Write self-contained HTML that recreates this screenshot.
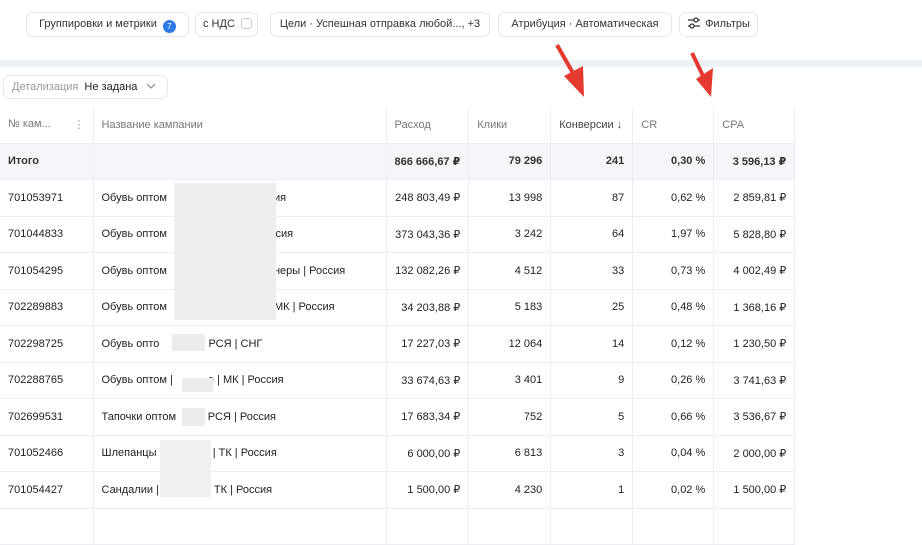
<!DOCTYPE html>
<html><head><meta charset="utf-8"><style>
*{margin:0;padding:0;box-sizing:border-box}
body{width:922px;height:518px;overflow:hidden;background:#fff;font-family:"Liberation Sans","DejaVu Sans",sans-serif;font-size:11px;color:#222;position:relative}
.chip{position:absolute;top:12px;height:25px;border:1px solid #e4e6ea;border-radius:7px;padding:0 7px;line-height:23px;font-size:11px;color:#333;white-space:nowrap;background:#fff;text-align:center}
.band{position:absolute;left:0;top:60px;width:922px;height:7px;background:#eef1f6}
.det{position:absolute;left:3px;top:75px;height:24px;width:165px;border:1px solid #e4e6ea;border-radius:7px;line-height:22px;padding-left:8px;color:#999}
.det b{font-weight:normal;color:#222;margin-left:3px}
table{position:absolute;left:0;top:107px;border-collapse:collapse;table-layout:fixed}
td{height:36.5px;border-bottom:1px solid #eceef1;border-right:1px solid #eceef1;padding:0 8px;white-space:nowrap;overflow:hidden}
tr.h td{color:#777;height:36px}
tr.t td{background:#f5f6f9;font-weight:bold;color:#333}
.r{text-align:right}
.blur{position:absolute;background:#ececec}
.arr{position:absolute}
</style></head><body>
<div class="chip" style="left:26px;width:163px">Группировки и метрики <span style="display:inline-block;width:13px;height:13px;border-radius:50%;background:#2f7ae5;color:#fff;font-size:8px;line-height:13px;text-align:center;vertical-align:-2px;margin-left:3px">7</span></div>
<div class="chip" style="left:195px;width:63px">с НДС <span style="display:inline-block;width:11px;height:11px;border:1px solid #ccc;border-radius:3px;vertical-align:-2px;margin-left:3px"></span></div>
<div class="chip" style="left:270px;width:220px">Цели · Успешная отправка любой..., +3</div>
<div class="chip" style="left:498px;width:174px">Атрибуция · Автоматическая</div>
<div class="chip" style="left:679px;width:79px"><svg width="14" height="12" style="vertical-align:-2px;margin-right:4px"><path d="M1 3h12M1 9h12" stroke="#333" stroke-width="1.3"/><circle cx="9" cy="3" r="2" fill="#fff" stroke="#333" stroke-width="1.3"/><circle cx="5" cy="9" r="2" fill="#fff" stroke="#333" stroke-width="1.3"/></svg>Фильтры</div>
<div class="band"></div>
<div class="det">Детализация <b>Не задана</b> <svg width="10" height="6" style="margin-left:5px;vertical-align:1px"><path d="M1 1l4 4 4-4" fill="none" stroke="#888" stroke-width="1.2"/></svg></div>
<table>
<colgroup><col style="width:93px"><col style="width:293px"><col style="width:81px"><col style="width:82px"><col style="width:82px"><col style="width:81px"><col style="width:81px"></colgroup>
<tr class="h"><td>№ кам... <span style="float:right;color:#999">⋮</span></td><td>Название кампании</td><td>Расход</td><td>Клики</td><td style="color:#444">Конверсии ↓</td><td>CR</td><td>CPA</td></tr>
<tr class="t"><td>Итого</td><td></td><td class="r">866 666,67 ₽</td><td class="r">79 296</td><td class="r">241</td><td class="r">0,30 %</td><td class="r">3 596,13 ₽</td></tr>
<tr><td>701053971</td><td>Обувь оптом <span style="margin-left:104px">ия</span></td><td class="r">248 803,49 ₽</td><td class="r">13 998</td><td class="r">87</td><td class="r">0,62 %</td><td class="r">2 859,81 ₽</td></tr>
<tr><td>701044833</td><td>Обувь оптом <span style="margin-left:100px">ссия</span></td><td class="r">373 043,36 ₽</td><td class="r">3 242</td><td class="r">64</td><td class="r">1,97 %</td><td class="r">5 828,80 ₽</td></tr>
<tr><td>701054295</td><td>Обувь оптом <span style="margin-left:104px">неры | Россия</span></td><td class="r">132 082,26 ₽</td><td class="r">4 512</td><td class="r">33</td><td class="r">0,73 %</td><td class="r">4 002,49 ₽</td></tr>
<tr><td>702289883</td><td>Обувь оптом <span style="margin-left:104px">МК | Россия</span></td><td class="r">34 203,88 ₽</td><td class="r">5 183</td><td class="r">25</td><td class="r">0,48 %</td><td class="r">1 368,16 ₽</td></tr>
<tr><td>702298725</td><td>Обувь опто<span style="margin-left:34px">о | РСЯ | СНГ</span></td><td class="r">17 227,03 ₽</td><td class="r">12 064</td><td class="r">14</td><td class="r">0,12 %</td><td class="r">1 230,50 ₽</td></tr>
<tr><td>702288765</td><td>Обувь оптом | <span style="margin-left:32px">е | МК | Россия</span></td><td class="r">33 674,63 ₽</td><td class="r">3 401</td><td class="r">9</td><td class="r">0,26 %</td><td class="r">3 741,63 ₽</td></tr>
<tr><td>702699531</td><td>Тапочки оптом <span style="margin-left:16px">) | РСЯ | Россия</span></td><td class="r">17 683,34 ₽</td><td class="r">752</td><td class="r">5</td><td class="r">0,66 %</td><td class="r">3 536,67 ₽</td></tr>
<tr><td>701052466</td><td>Шлепанцы <span style="margin-left:44px">е | ТК | Россия</span></td><td class="r">6 000,00 ₽</td><td class="r">6 813</td><td class="r">3</td><td class="r">0,04 %</td><td class="r">2 000,00 ₽</td></tr>
<tr><td>701054427</td><td>Сандалии | <span style="margin-left:46px">| ТК | Россия</span></td><td class="r">1 500,00 ₽</td><td class="r">4 230</td><td class="r">1</td><td class="r">0,02 %</td><td class="r">1 500,00 ₽</td></tr>
<tr><td></td><td></td><td></td><td></td><td></td><td></td><td></td></tr>
</table>
<div class="blur" style="left:174px;top:183px;width:102px;height:137px;background:#eeeeee"></div>
<div class="blur" style="left:172px;top:334px;width:33px;height:17px"></div>
<div class="blur" style="left:182px;top:378px;width:31px;height:14px"></div>
<div class="blur" style="left:182px;top:408px;width:23px;height:18px"></div>
<div class="blur" style="left:160px;top:440px;width:51px;height:57px;background:#f0f0f0"></div>
<svg class="arr" style="left:550px;top:40px" width="50" height="60"><path d="M7 5L27 40" stroke="#e53a2f" stroke-width="4"/><path d="M14 36L34 57L33 26Z" fill="#e53a2f"/></svg>
<svg class="arr" style="left:685px;top:50px" width="40" height="50"><path d="M7 3L20 30" stroke="#e53a2f" stroke-width="4"/><path d="M11 29L26 47L28 18Z" fill="#e53a2f"/></svg>
</body></html>
